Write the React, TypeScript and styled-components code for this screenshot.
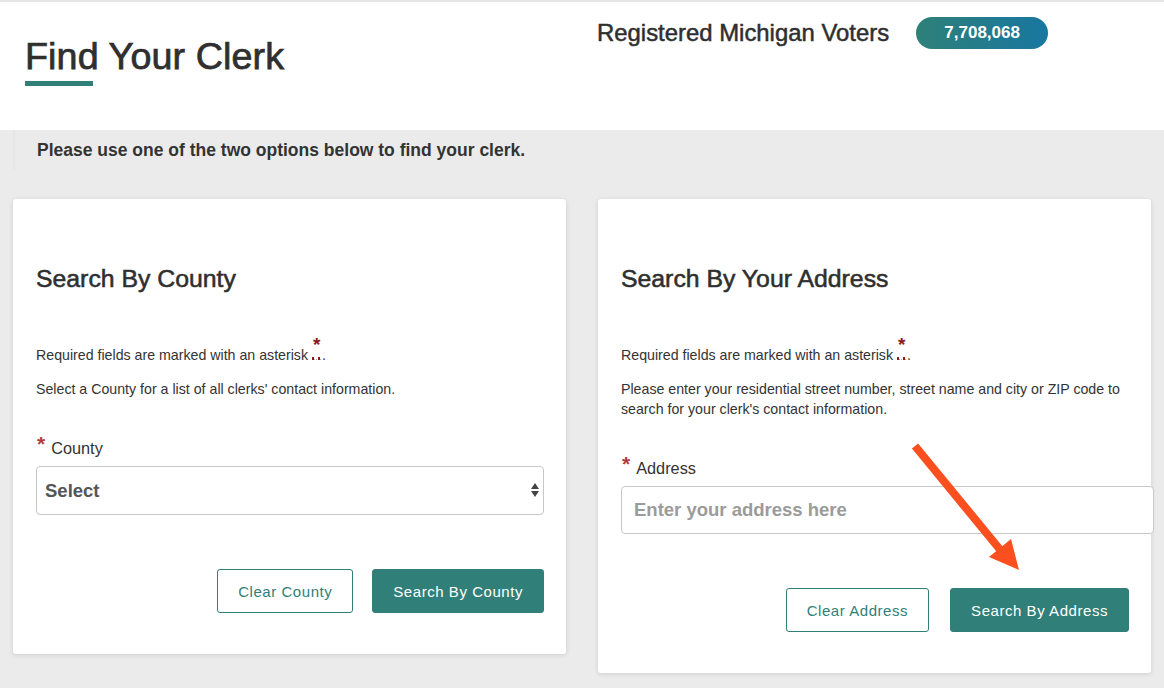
import React from "react";
import styled, { createGlobalStyle } from "styled-components";

const GlobalStyle = createGlobalStyle`
  html, body { margin: 0; padding: 0; }
  body {
    font-family: "Liberation Sans", Arial, Helvetica, sans-serif;
    color: #333;
    background: #ebebeb;
    width: 1164px;
    height: 688px;
    overflow: hidden;
  }
  * { box-sizing: border-box; }
`;

const TEAL = "#307f78";

const Page = styled.div`
  position: relative;
  width: 1164px;
  min-height: 688px;
  background: #ebebeb;
`;

const Header = styled.header`
  display: grid;
  grid-template-columns: 553px 553px;
  column-gap: 32px;
  padding-left: 13px;
  height: 130px;
  background: #fff;
  border-top: 2px solid #e6e6e6;
`;

const TitleBlock = styled.div`
  padding: 33px 0 0 12px;
`;

const Title = styled.h1`
  margin: 0;
  font-size: 37.7px;
  line-height: 43px;
  font-weight: 400;
  color: #2f2f2f;
  letter-spacing: 0.1px;
  -webkit-text-stroke: 0.75px #2f2f2f;
`;

const TitleBar = styled.div`
  width: 68px;
  height: 5px;
  margin-top: 3px;
  background: ${TEAL};
`;

const VotersBlock = styled.div`
  display: flex;
  align-items: center;
  gap: 27px;
  height: 32px;
  margin-top: 15px;
  margin-left: -1px;
`;

const VotersLabel = styled.span`
  font-size: 23.9px;
  color: #2f2f2f;
  -webkit-text-stroke: 0.5px #2f2f2f;
`;

const VotersBadge = styled.span`
  display: inline-flex;
  align-items: center;
  justify-content: center;
  width: 132px;
  height: 32px;
  border-radius: 16px;
  background: linear-gradient(90deg, #2e8078 0%, #1877a1 100%);
  color: #fff;
  font-weight: 700;
  font-size: 17px;
`;

const Intro = styled.div`
  margin-left: 13px;
  height: 40px;
  padding: 10px 0 0 24px;
  font-size: 17.5px;
  font-weight: 700;
  color: #333;
  background: linear-gradient(90deg, #e6e6e6 0, #e6e6e6 2px, transparent 2px);
`;

const Cards = styled.div`
  display: grid;
  grid-template-columns: 553px 553px;
  column-gap: 32px;
  align-items: start;
  padding-left: 13px;
  margin-top: 29px;
`;

const Card = styled.section`
  background: #fff;
  border-radius: 3px;
  box-shadow: 0 1px 5px rgba(0, 0, 0, 0.12);
  padding: 65px 22px 41px 23px;
  display: flex;
  flex-direction: column;
`;

const CardTitle = styled.h2`
  margin: 0;
  font-size: 24.8px;
  line-height: 30px;
  font-weight: 400;
  color: #2f2f2f;
  -webkit-text-stroke: 0.55px #2f2f2f;
`;

const Text = styled.p<{ $gap: number }>`
  margin: ${(p) => p.$gap}px 0 0;
  font-size: 14.2px;
  line-height: 20px;
  color: #333;
`;

const Req = styled.abbr`
  text-decoration: none;
  border-bottom: 1px dotted #aaa;
  color: #8b1a1a;
  position: relative;
  display: inline-block;
  width: 9px;
  height: 15px;
  margin: 0 1px 0 4px;
  vertical-align: baseline;
`;

const ReqStar = styled.span`
  position: absolute;
  left: 1px;
  top: -10px;
  font-size: 19px;
  font-weight: 700;
  color: #8b1a1a;
`;

const ReqDots = styled.span`
  position: absolute;
  left: 0;
  bottom: -1px;
  width: 9px;
  height: 3px;
  background: linear-gradient(90deg, #8b1a1a 0 2px, transparent 2px 6px, #8b1a1a 6px 8px, transparent 8px);
`;

const Label = styled.label<{ $gap: number }>`
  display: flex;
  align-items: baseline;
  margin-top: ${(p) => p.$gap}px;
  font-size: 16.3px;
  line-height: 20px;
  color: #333;
`;

const LabelStar = styled.span`
  color: #b33a3a;
  font-weight: 700;
  font-size: 21px;
  margin: 0 6px 0 1px;
  position: relative;
  top: -3px;
`;

const SelectWrap = styled.div`
  position: relative;
  margin-top: 8px;
  width: 508px;
`;

const Select = styled.div`
  height: 49px;
  border: 1px solid #c8c8c8;
  border-radius: 4px;
  display: flex;
  align-items: center;
  padding-left: 8px;
  font-size: 18.5px;
  font-weight: 700;
  color: #555;
`;

const SelectArrows = styled.svg`
  position: absolute;
  right: 4px;
  top: 16px;
`;

const Input = styled.input`
  margin-top: 8px;
  width: 533px;
  height: 48px;
  border: 1px solid #c8c8c8;
  border-radius: 4px;
  padding: 0 12px;
  font-family: inherit;
  font-size: 18.5px;
  font-weight: 700;
  color: #333;
  outline: none;
  &::placeholder { color: #9b9b9b; }
`;

const Actions = styled.div<{ $gap: number }>`
  display: flex;
  justify-content: flex-end;
  gap: ${(p) => p.$gap}px;
  margin-top: 54px;
`;

const Button = styled.button<{ $primary?: boolean }>`
  height: 44px;
  padding: 0 20px;
  border-radius: 3px;
  border: 1px solid ${TEAL};
  background: ${(p) => (p.$primary ? TEAL : "#fff")};
  color: ${(p) => (p.$primary ? "#fff" : TEAL)};
  font-family: inherit;
  font-size: 15px;
  letter-spacing: 0.55px;
  cursor: pointer;
`;

const Annotation = styled.svg`
  position: absolute;
  left: 0;
  top: 0;
  pointer-events: none;
`;

const RequiredNote = () => (
  <Text $gap={51}>
    Required fields are marked with an asterisk
    <Req title="required">
      <ReqStar>*</ReqStar>
      <ReqDots />
    </Req>
    .
  </Text>
);

export default function App() {
  return (
    <>
      <GlobalStyle />
      <Page>
        <Header>
          <TitleBlock>
            <Title>Find Your Clerk</Title>
            <TitleBar />
          </TitleBlock>
          <VotersBlock>
            <VotersLabel>Registered Michigan Voters</VotersLabel>
            <VotersBadge>7,708,068</VotersBadge>
          </VotersBlock>
        </Header>
        <Intro>Please use one of the two options below to find your clerk.</Intro>
        <Cards>
          <Card>
            <CardTitle>Search By County</CardTitle>
            <RequiredNote />
            <Text $gap={14}>Select a County for a list of all clerks' contact information.</Text>
            <Label $gap={38}>
              <LabelStar>*</LabelStar>County
            </Label>
            <SelectWrap>
              <Select>Select</Select>
              <SelectArrows width="10" height="16" viewBox="0 0 10 16">
                <path d="M5 1 L9 7 L1 7 Z" fill="#444" />
                <path d="M1 9 L9 9 L5 15 Z" fill="#444" />
              </SelectArrows>
            </SelectWrap>
            <Actions $gap={19}>
              <Button>Clear County</Button>
              <Button $primary>Search By County</Button>
            </Actions>
          </Card>
          <Card>
            <CardTitle>Search By Your Address</CardTitle>
            <RequiredNote />
            <Text $gap={14}>
              Please enter your residential street number, street name and city or ZIP code to
              search for your clerk's contact information.
            </Text>
            <Label $gap={38}>
              <LabelStar>*</LabelStar>Address
            </Label>
            <Input placeholder="Enter your address here" />
            <Actions $gap={21}>
              <Button>Clear Address</Button>
              <Button $primary>Search By Address</Button>
            </Actions>
          </Card>
        </Cards>
        <Annotation width="1164" height="688" viewBox="0 0 1164 688">
          <line x1="915" y1="446" x2="1002" y2="552" stroke="#fc4f1f" strokeWidth="8" />
          <path d="M1019 570 L989 557 L1011 539 Z" fill="#fc4f1f" />
        </Annotation>
      </Page>
    </>
  );
}
